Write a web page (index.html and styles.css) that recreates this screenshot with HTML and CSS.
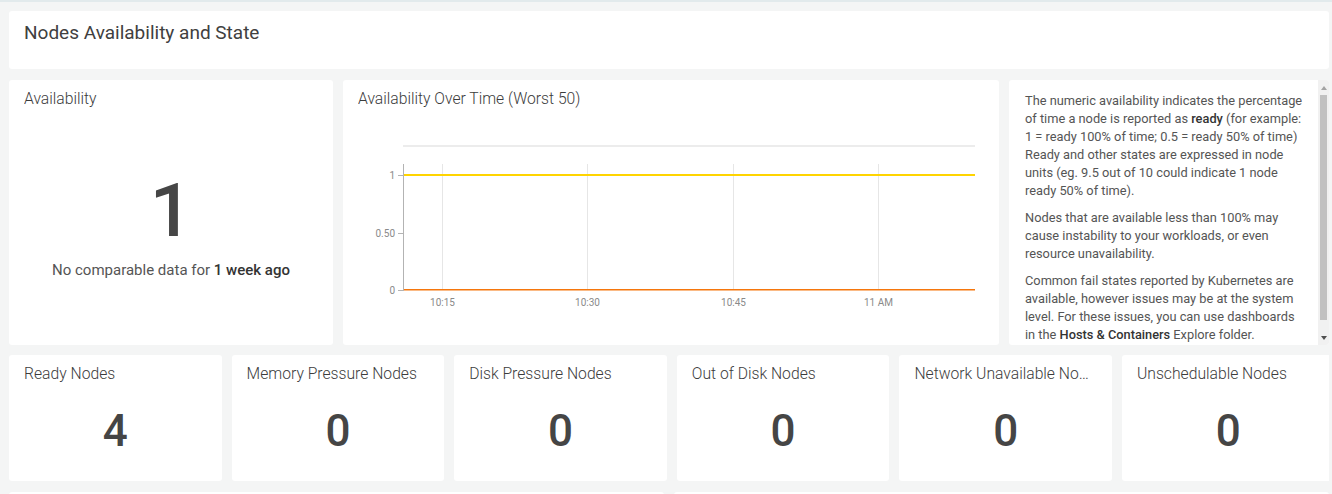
FILE: index.html
```html
<!DOCTYPE html>
<html lang="en">
<head>
    <meta charset="UTF-8">
    <meta name="viewport" content="width=device-width, initial-scale=1.0">
    <title>Nodes Availability and State</title>
    <link rel="stylesheet" href="styles.css">
</head>
<body>
    <div class="topline"></div>
    <div class="dashboard">
        <section class="card header-card">
            <h1>Nodes Availability and State</h1>
        </section>

        <div class="row row-main">
            <section class="card panel billboard">
                <h2 class="panel-title">Availability</h2>
                <div class="big-value">1</div>
                <p class="compare">No comparable data for <strong>1 week ago</strong></p>
            </section>

            <section class="card panel chart-panel">
                <h2 class="panel-title">Availability Over Time (Worst 50)</h2>
                <svg class="chart" width="626" height="200" viewBox="0 0 626 200">
                    <!-- legend strip -->
                    <line x1="45" y1="26" x2="617" y2="26" stroke="#ececec" stroke-width="2"/>
                    <!-- grid -->
                    <g stroke="#e6e6e6" stroke-width="1">
                        <line x1="84.5" y1="44" x2="84.5" y2="170"/>
                        <line x1="229.5" y1="44" x2="229.5" y2="170"/>
                        <line x1="375.5" y1="44" x2="375.5" y2="170"/>
                        <line x1="520.5" y1="44" x2="520.5" y2="170"/>
                    </g>
                    <!-- y axis -->
                    <g stroke="#b3b3b3" stroke-width="1">
                        <line x1="45.5" y1="44" x2="45.5" y2="171"/>
                        <line x1="40" y1="55.5" x2="45" y2="55.5"/>
                        <line x1="40" y1="113.5" x2="45" y2="113.5"/>
                        <line x1="40" y1="170.5" x2="45" y2="170.5"/>
                    </g>
                    <g class="axis-label" text-anchor="end">
                        <text x="37" y="59">1</text>
                        <text x="37" y="117">0.50</text>
                        <text x="37" y="174">0</text>
                    </g>
                    <g class="axis-label" text-anchor="middle">
                        <text x="84.5" y="186">10:15</text>
                        <text x="229.5" y="186">10:30</text>
                        <text x="375.5" y="186">10:45</text>
                        <text x="520.5" y="186">11 AM</text>
                    </g>
                    <!-- series -->
                    <line x1="46" y1="55" x2="617" y2="55" stroke="#ffd400" stroke-width="2.2"/>
                    <line x1="46" y1="169.8" x2="617" y2="169.8" stroke="#f5760c" stroke-width="1.6"/>
                </svg>
            </section>

            <section class="card markdown">
                <div class="markdown-body">
                    <p>The numeric availability indicates the percentage of time a node is reported as <strong>ready</strong> (for example: 1 = ready 100% of time; 0.5 = ready 50% of time) Ready and other states are expressed in node units (eg. 9.5 out of 10 could indicate 1 node ready 50% of time).</p>
                    <p>Nodes that are available less than 100% may cause instability to your workloads, or even resource unavailability.</p>
                    <p>Common fail states reported by Kubernetes are available, however issues may be at the system level. For these issues, you can use dashboards in the <strong>Hosts &amp; Containers</strong> Explore folder.</p>
                </div>
                <div class="scrollbar">
                    <div class="scroll-btn"><span class="arrow-up"></span></div>
                    <div class="scroll-track"><div class="scroll-thumb"></div></div>
                    <div class="scroll-btn"><span class="arrow-down"></span></div>
                </div>
            </section>
        </div>

        <div class="row row-nodes">
            <section class="card panel node-card">
                <h2 class="panel-title">Ready Nodes</h2>
                <div class="node-value">4</div>
            </section>
            <section class="card panel node-card">
                <h2 class="panel-title">Memory Pressure Nodes</h2>
                <div class="node-value">0</div>
            </section>
            <section class="card panel node-card">
                <h2 class="panel-title">Disk Pressure Nodes</h2>
                <div class="node-value">0</div>
            </section>
            <section class="card panel node-card">
                <h2 class="panel-title">Out of Disk Nodes</h2>
                <div class="node-value">0</div>
            </section>
            <section class="card panel node-card">
                <h2 class="panel-title">Network Unavailable Nodes</h2>
                <div class="node-value">0</div>
            </section>
            <section class="card panel node-card">
                <h2 class="panel-title">Unschedulable Nodes</h2>
                <div class="node-value">0</div>
            </section>
        </div>

        <div class="row row-next">
            <section class="card"></section>
            <section class="card"></section>
        </div>
    </div>
</body>
</html>
```

FILE: styles.css
```css
html, body {
    height: 494px;
}

body {
    font-family: Roboto, "Liberation Sans", sans-serif;
    margin: 0;
    padding: 0;
    background-color: #f4f5f5;
    color: #555;
    overflow: hidden;
}

.topline {
    height: 2px;
    background-color: #e2eaec;
}

.dashboard {
    width: 1320px;
    padding: 9px 0 0 9px;
    display: flex;
    flex-direction: column;
    gap: 11px;
}

.card {
    background-color: #fff;
    border-radius: 3px;
    box-sizing: border-box;
}

.header-card {
    height: 58px;
    padding: 10px 15px;
}

.header-card h1 {
    margin: 0;
    font-size: 19px;
    line-height: 24px;
    font-weight: 400;
    color: #404040;
}

.row {
    display: grid;
    gap: 10px;
}

.row-main {
    grid-template-columns: 324px 656px 1fr;
    height: 265px;
}

.row-nodes {
    grid-template-columns: repeat(6, 212.6px);
    height: 126px;
    margin-top: -1px;
    overflow: hidden;
}

.row-next {
    grid-template-columns: 1fr 1fr;
    height: 100px;
}

.panel {
    padding: 9px 15px;
}

.panel-title {
    margin: 0;
    font-size: 15.7px;
    line-height: 20px;
    font-weight: 300;
    color: #3c3c3c;
    white-space: nowrap;
    overflow: hidden;
    text-overflow: ellipsis;
}

/* Availability billboard */
.billboard {
    text-align: center;
}

.billboard .panel-title {
    text-align: left;
}

.big-value {
    margin-top: 64px;
    font-size: 75px;
    line-height: 75px;
    font-weight: 500;
    color: #464646;
}

.compare {
    margin: 12px 0 0;
    font-size: 15px;
    line-height: 20px;
    color: #555;
}

.compare strong {
    font-weight: 500;
    color: #333;
}

/* Line chart */
.chart {
    display: block;
    margin-top: 11px;
}

.axis-label {
    font-family: Roboto, "Liberation Sans", sans-serif;
    font-size: 10px;
    fill: #8a8a8a;
}

/* Markdown / help text */
.markdown {
    display: flex;
    overflow: hidden;
}

.markdown-body {
    flex: 1;
    padding: 12px 11px 0 16px;
    overflow: hidden;
    font-size: 12.8px;
    line-height: 18px;
    color: #555;
}

.markdown-body p {
    margin: 0 0 9px;
}

.markdown-body strong {
    font-weight: 500;
    color: #333;
}

.scrollbar {
    width: 11px;
    display: flex;
    flex-direction: column;
    background-color: #f1f1f1;
}

.scroll-btn {
    height: 15px;
    display: flex;
    align-items: center;
    justify-content: center;
}

.scroll-track {
    flex: 1;
}

.scroll-thumb {
    height: 225px;
    margin: 0 2px;
    background-color: #c1c1c1;
}

.arrow-up {
    border-left: 3.5px solid transparent;
    border-right: 3.5px solid transparent;
    border-bottom: 4px solid #a3a3a3;
}

.arrow-down {
    border-left: 3.5px solid transparent;
    border-right: 3.5px solid transparent;
    border-top: 4px solid #505050;
}

/* Node counts */
.node-card {
    text-align: center;
}

.node-card .panel-title {
    text-align: left;
}

.node-value {
    margin-top: 25px;
    font-size: 44px;
    line-height: 44px;
    font-weight: 500;
    color: #454545;
}
```
